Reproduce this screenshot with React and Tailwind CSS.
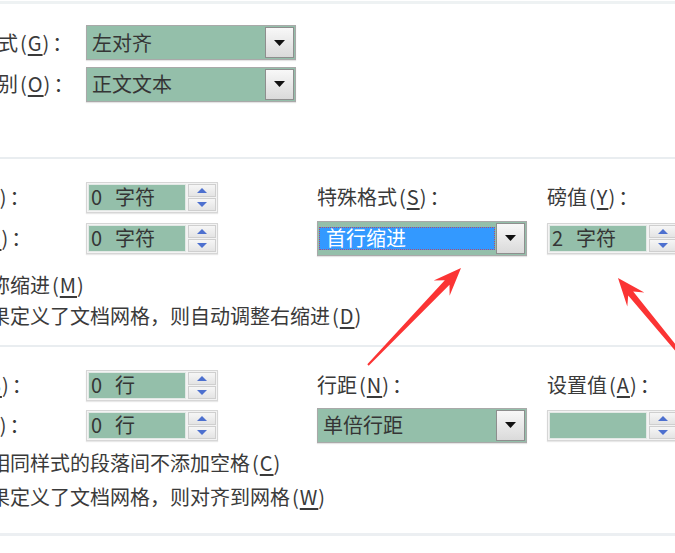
import React from "react";

function Acc({ k }) {
  return (
    <span className="mx-[2px] tracking-[1px]">
      (<span className="underline underline-offset-[3px]">{k}</span>)
    </span>
  );
}

function Label({ text, k, colon = true }) {
  return (
    <span className="whitespace-nowrap text-[#3a3a3a]">
      {text}
      <Acc k={k} />
      {colon ? "：" : ""}
    </span>
  );
}

function Caret() {
  return (
    <svg width="11" height="6" viewBox="0 0 11 6">
      <path d="M0 0h11L5.5 6z" fill="#111" />
    </svg>
  );
}

function Select({ value, selected }) {
  return (
    <div className="flex h-[35px] w-[210px] border border-[#a9a9a9] bg-[#94bfaa] shadow-[0_1px_1px_#e4e4e4]">
      <div className="flex flex-1 items-center pl-[1px] pr-[1px]">
        {selected ? (
          <div className="flex h-[23px] flex-1 items-center border border-dotted border-[#b0506a] bg-[#3399ff] pl-[6px] text-white">
            {value}
          </div>
        ) : (
          <span className="pl-[4px] text-[#353535]">{value}</span>
        )}
      </div>
      <div className="my-[1px] mr-[1px] flex w-[29px] items-center justify-center border border-[#8e8e8e] bg-gradient-to-b from-[#f8f8f8] to-[#dadada]">
        <Caret />
      </div>
    </div>
  );
}

function SpinBtn({ up }) {
  return (
    <div className="flex flex-1 items-center justify-center border border-[#cfcfcf] bg-gradient-to-b from-[#f6f6f6] to-[#e4e4e4]">
      <svg width="10" height="5" viewBox="0 0 10 5">
        <path d={up ? "M0 5h10L5 0z" : "M0 0h10L5 5z"} fill="#4d70cf" />
      </svg>
    </div>
  );
}

function Spin({ value, unit }) {
  return (
    <div className="flex h-[31px] w-[132px] border border-[#d6d6d6] bg-[#f3f3f3] p-[1px] shadow-[0_1px_1px_#e8e8e8]">
      <div className="flex flex-1 items-center border border-[#e2e8e5] bg-[#94bfaa] pl-[2px] text-[#353535]">
        {value !== undefined && (
          <>
            <span>{value}</span>
            <span className="ml-[13px]">{unit}</span>
          </>
        )}
      </div>
      <div className="ml-[2px] flex w-[28px] flex-col gap-[1px]">
        <SpinBtn up />
        <SpinBtn />
      </div>
    </div>
  );
}

function Check({ children }) {
  return (
    <div className="flex h-[28px] items-center pl-[8px]">
      <span className="mr-[9px] h-[13px] w-[13px] border border-[#8f8f8f] bg-white" />
      <span className="whitespace-nowrap text-[#3a3a3a]">{children}</span>
    </div>
  );
}

function Rule({ className = "" }) {
  return <div className={"h-[2px] w-full bg-[#e9edf0] " + className} />;
}

function arrowPoints(tx, ty, px, py, head, neck, half, tailW, neckW) {
  const len = Math.hypot(px - tx, py - ty);
  const ux = (px - tx) / len;
  const uy = (py - ty) / len;
  const nx = -uy;
  const ny = ux;
  const bx = px - ux * head;
  const by = py - uy * head;
  const jx = px - ux * neck;
  const jy = py - uy * neck;
  const pts = [
    [tx + nx * tailW, ty + ny * tailW],
    [jx + nx * neckW, jy + ny * neckW],
    [bx + nx * half, by + ny * half],
    [px, py],
    [bx - nx * half, by - ny * half],
    [jx - nx * neckW, jy - ny * neckW],
    [tx - nx * tailW, ty - ny * tailW],
  ];
  return pts.map((p) => p.map((v) => v.toFixed(1)).join(",")).join(" ");
}

const arrowA = arrowPoints(368, 365, 461, 268, 28, 20, 11, 1, 3.2);
const arrowB = arrowPoints(702, 380, 618, 278, 28, 20, 11, 1.5, 3.2);

export default function App() {
  return (
    <div className="relative h-[553px] w-[675px] overflow-hidden bg-white font-['Noto_Sans_CJK_SC',sans-serif] text-[20px]">
      {/* dialog body, its left part lies outside the crop */}
      <div className="-ml-[62px] w-[800px]">
        <div className="mt-[1px] h-[3px] w-full bg-[#eef2f3]" />

        {/* 常规 */}
        <div className="mt-[21px] flex h-[35px] items-center">
          <div className="w-[148px]">
            <Label text="对齐方式" k="G" />
          </div>
          <Select value="左对齐" />
        </div>
        <div className="mt-[7px] flex h-[34px] items-center">
          <div className="w-[148px]">
            <Label text="大纲级别" k="O" />
          </div>
          <Select value="正文文本" />
        </div>

        <Rule className="mt-[56px]" />

        {/* 缩进 */}
        <div className="mt-[20px] flex h-[36px] items-center">
          <div className="w-[148px]">
            <Label text="左侧" k="L" />
          </div>
          <Spin value="0" unit="字符" />
          <div className="w-[99px]" />
          <div className="w-[230px]">
            <Label text="特殊格式" k="S" />
          </div>
          <Label text="磅值" k="Y" />
        </div>
        <div className="mt-[5px] flex h-[36px] items-center">
          <div className="w-[148px]">
            <Label text="右侧" k="R" />
          </div>
          <Spin value="0" unit="字符" />
          <div className="w-[99px]" />
          <Select value="首行缩进" selected />
          <div className="w-[20px]" />
          <Spin value="2" unit="字符" />
        </div>
        <div className="mt-[15px] pl-[2px]">
          <Check>
            对称缩进<Acc k="M" />
          </Check>
        </div>
        <div className="mt-[3px] pl-[2px]">
          <Check>
            如果定义了文档网格，则自动调整右缩进<Acc k="D" />
          </Check>
        </div>

        <Rule className="mt-[15px]" />

        {/* 间距 */}
        <div className="mt-[20px] flex h-[36px] items-center">
          <div className="w-[148px]">
            <Label text="段前" k="B" />
          </div>
          <Spin value="0" unit="行" />
          <div className="w-[99px]" />
          <div className="w-[230px]">
            <Label text="行距" k="N" />
          </div>
          <Label text="设置值" k="A" />
        </div>
        <div className="mt-[4px] flex h-[36px] items-center">
          <div className="w-[148px]">
            <Label text="段后" k="F" />
          </div>
          <Spin value="0" unit="行" />
          <div className="w-[99px]" />
          <Select value="单倍行距" />
          <div className="w-[20px]" />
          <Spin />
        </div>
        <div className="mt-[6px] pl-[2px]">
          <Check>
            在相同样式的段落间不添加空格<Acc k="C" />
          </Check>
        </div>
        <div className="mt-[6px] pl-[2px]">
          <Check>
            如果定义了文档网格，则对齐到网格<Acc k="W" />
          </Check>
        </div>

        <div className="mt-[22px] h-[3px] w-full bg-[#eceff2]" />
      </div>

      {/* annotation arrows */}
      <svg className="pointer-events-none absolute inset-0" width="675" height="553" viewBox="0 0 675 553">
        <polygon points={arrowA} fill="#fb3434" />
        <polygon points={arrowB} fill="#fb3434" />
      </svg>
    </div>
  );
}
